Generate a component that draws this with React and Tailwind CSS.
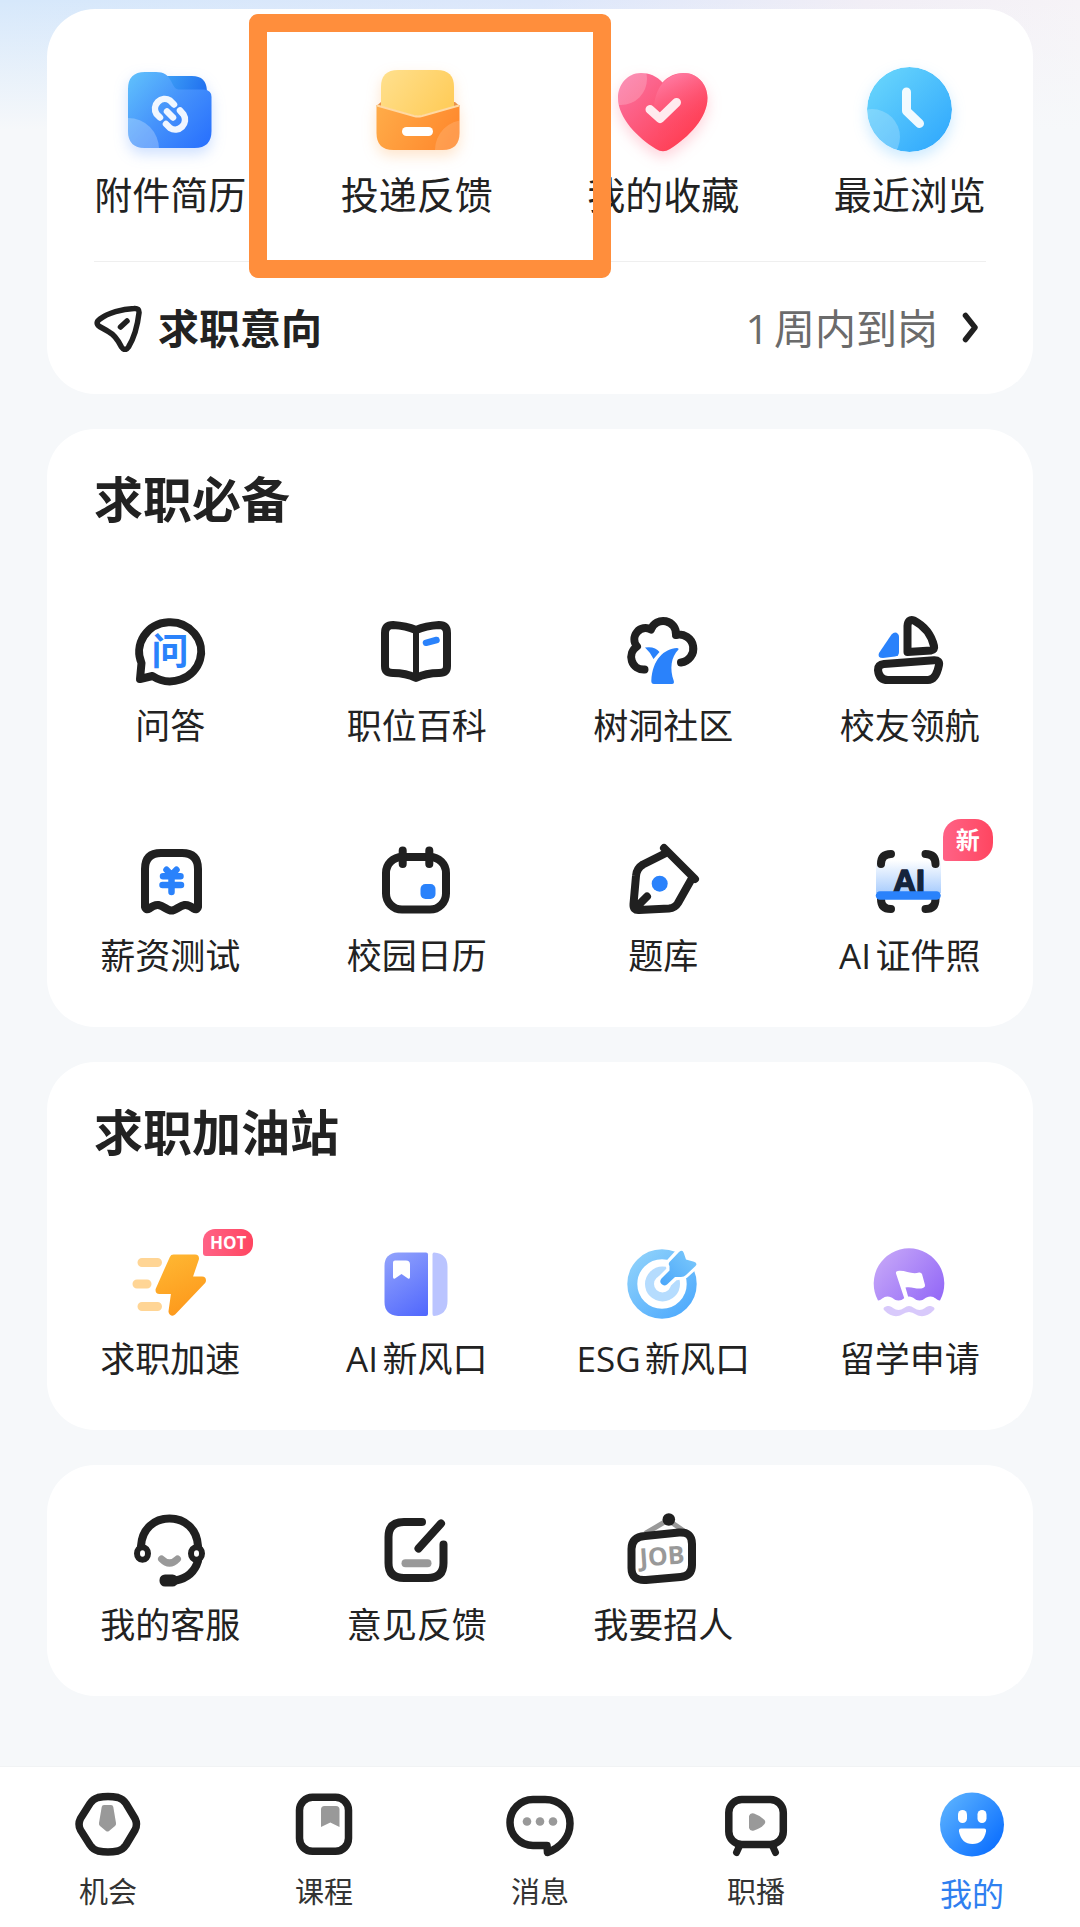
const INK = "#202020";
const BLUE = "#2a82fb";
const GRAY = "#999999";

// Quick links

function FolderIcon() {
  return (
    <svg className="size-28 drop-shadow-[0_6px_7px_rgba(60,130,255,0.25)]" viewBox="0 0 112 112" fill="none" aria-hidden="true">
      <defs>
        <linearGradient id="folder-front" x1="14" y1="24" x2="90" y2="92" gradientUnits="userSpaceOnUse">
          <stop stopColor="#5fbffc" />
          <stop offset="0.5" stopColor="#4592fb" />
          <stop offset="1" stopColor="#2a72fd" />
        </linearGradient>
        <linearGradient id="folder-back" x1="54" y1="22" x2="90" y2="36" gradientUnits="userSpaceOnUse">
          <stop stopColor="#3b9cf5" />
          <stop offset="1" stopColor="#2272f0" />
        </linearGradient>
        <clipPath id="folder-clip">
          <path d="M31 18H42C50 18 54 21 57 27C60 33 61 35.500 66 35.500H90Q97.500 36 97.500 43V77Q97.500 94 80.500 94H31Q14 94 14 77V35Q14 18 31 18Z" />
        </clipPath>
      </defs>
      <path d="M50 22H78Q92.500 22 93 37V44H50Z" fill="url(#folder-back)" />
      <g clipPath="url(#folder-clip)">
        <rect x="14" y="17" width="84" height="78" fill="url(#folder-front)" />
        <circle cx="14" cy="95" r="31" fill="#fff" opacity="0.25" />
      </g>
      <g stroke="#fff" strokeWidth="6.500" strokeLinecap="round" strokeOpacity="0.92">
        <path d="M46 63.500L42.500 60A9.800 9.800 0 0 1 56 46.500L60 50.500" />
        <path d="M66 56.500L69.500 60.500A9.800 9.800 0 0 1 56 74L52 70" />
        <path d="M53 57.500L59 63.500" />
      </g>
    </svg>
  );
}

function EnvelopeIcon() {
  return (
    <svg className="size-28 drop-shadow-[0_6px_7px_rgba(255,150,50,0.25)]" viewBox="0 0 112 112" fill="none" aria-hidden="true">
      <defs>
        <linearGradient id="env-paper" x1="24" y1="18" x2="80" y2="60" gradientUnits="userSpaceOnUse">
          <stop stopColor="#ffdf8b" />
          <stop offset="1" stopColor="#ffcd5c" />
        </linearGradient>
        <linearGradient id="env-body" x1="16" y1="56" x2="84" y2="94" gradientUnits="userSpaceOnUse">
          <stop stopColor="#ffab48" />
          <stop offset="1" stopColor="#ff8a2e" />
        </linearGradient>
        <clipPath id="env-clip">
          <path d="M15.500 51L57 62.500L98.500 51V79Q98.500 96 81.500 96H32.500Q15.500 96 15.500 79Z" />
        </clipPath>
      </defs>
      <path d="M15.500 52L20 48H94L98.500 52L90 58H24Z" fill="#e9924c" />
      <path d="M20 58V33Q20 16 37 16H76Q93 16 93 33V58L57 68Z" fill="url(#env-paper)" />
      <g clipPath="url(#env-clip)">
        <rect x="15" y="48" width="84" height="50" fill="url(#env-body)" />
        <circle cx="104" cy="96" r="30" fill="#fff" opacity="0.15" />
      </g>
      <path d="M16 51.500L53 62Q57 63 61 62L98 51.500" stroke="#ffd9a3" strokeWidth="2" />
      <rect x="41" y="73" width="31" height="9" rx="4.500" fill="#fff" />
    </svg>
  );
}

function HeartIcon() {
  return (
    <svg className="size-28 drop-shadow-[0_6px_7px_rgba(255,80,110,0.25)]" viewBox="0 0 112 112" fill="none" aria-hidden="true">
      <defs>
        <linearGradient id="heart-fill" x1="20" y1="26" x2="76" y2="84" gradientUnits="userSpaceOnUse">
          <stop stopColor="#fb6f9d" />
          <stop offset="1" stopColor="#ff4158" />
        </linearGradient>
        <linearGradient id="heart-lobe" x1="56" y1="24" x2="78" y2="72" gradientUnits="userSpaceOnUse">
          <stop stopColor="#ff7ba3" />
          <stop offset="1" stopColor="#ff4158" stopOpacity="0" />
        </linearGradient>
        <clipPath id="heart-clip">
          <path d="M55.500 28.500C50 22 42 19 34 19C21 19 11 30 11 44C11 64 31 84 49 95Q56 99.500 63 95C82 83 100.500 64 100.500 44C100.500 30 90 19 77 19C69 19 61 22 55.500 28.500Z" />
        </clipPath>
      </defs>
      <g clipPath="url(#heart-clip)">
        <rect x="10" y="18" width="92" height="82" fill="url(#heart-fill)" />
        <path d="M77 19C58 20 46 36 47 58L56 98L102 60V19Z" fill="url(#heart-lobe)" />
        <circle cx="14" cy="25" r="26" fill="#fff" opacity="0.2" />
      </g>
      <path d="M43 55.500L53 64.500L69.500 48.500" stroke="#fff" strokeOpacity="0.88" strokeWidth="9" strokeLinecap="round" strokeLinejoin="round" />
    </svg>
  );
}

function ClockIcon() {
  return (
    <svg className="size-28 drop-shadow-[0_6px_7px_rgba(50,170,255,0.25)]" viewBox="0 0 112 112" fill="none" aria-hidden="true">
      <defs>
        <linearGradient id="clock-fill" x1="26" y1="26" x2="86" y2="86" gradientUnits="userSpaceOnUse">
          <stop stopColor="#63d1fc" />
          <stop offset="1" stopColor="#35acfd" />
        </linearGradient>
        <clipPath id="clock-clip">
          <circle cx="55.500" cy="55.500" r="42.500" />
        </clipPath>
      </defs>
      <g clipPath="url(#clock-clip)">
        <circle cx="55.500" cy="55.500" r="42.500" fill="url(#clock-fill)" />
        <circle cx="18" cy="83" r="28" fill="#fff" opacity="0.22" />
      </g>
      <path d="M52.500 38V57L65.500 69.500" stroke="#fff" strokeOpacity="0.92" strokeWidth="9" strokeLinecap="round" strokeLinejoin="round" />
    </svg>
  );
}

function PlaneIcon() {
  return (
    <svg className="size-12" viewBox="0 0 48 48" fill="none" stroke={INK} strokeWidth="5.500" strokeLinecap="round" strokeLinejoin="round" aria-hidden="true">
      <path d="M6 15C14 9 28 5 40 4.500Q45.500 4 45 9C43.500 22 40 34 34.500 43Q31 48 27.500 43C24 36 21 31 15 28C12 26 9 24.500 5.500 22.500Q0.500 19 6 15Z" />
      <path d="M26.500 23L33 17" />
    </svg>
  );
}

function ChevronIcon() {
  return (
    <svg className="h-9 w-6" viewBox="0 0 24 36" fill="none" stroke={INK} strokeWidth="5.500" strokeLinecap="round" strokeLinejoin="round" aria-hidden="true">
      <path d="M3.500 5.500L13 17.500L3.500 29.500" />
    </svg>
  );
}

// Line icons of the tool grids share one box and stroke

function LineIcon({ children }) {
  return (
    <svg className="size-24" viewBox="0 0 96 96" fill="none" stroke={INK} strokeWidth="8" strokeLinecap="round" strokeLinejoin="round" aria-hidden="true">
      {children}
    </svg>
  );
}

function AskIcon() {
  return (
    <LineIcon>
      <path d="M30.500 73A31 29.500 0 1 0 19.500 60L18 76Z" />
      <text x="48" y="61.500" textAnchor="middle" fontSize="37" fontWeight="700" fill={BLUE} stroke="none">
        问
      </text>
    </LineIcon>
  );
}

function BookIcon() {
  return (
    <LineIcon>
      <path d="M47 27C40 24 32 22.500 24 22Q16 22 16 30V63Q16 70 24 70Q37 70 47 75Q57 70 70 70Q78 70 78 63V30Q78 22 70 22C62 22.500 54 24 47 27Z" />
      <path strokeWidth="6" strokeLinecap="butt" d="M47 28V74" />
      <path stroke={BLUE} strokeWidth="6.500" d="M57 39.800L67.500 37" />
    </LineIcon>
  );
}

function TreeIcon() {
  return (
    <LineIcon>
      <path d="M29.500 66.500A12.500 12.500 0 0 1 22 43.500A11.200 11.200 0 0 1 36 26.500A12.900 12.900 0 0 1 61 32A14 14 0 1 1 66 59.500" />
      <g fill={BLUE} stroke="none">
        <path d="M62 45C49 46 37.500 56 36.300 78Q36.300 81 39 81H57Q59.500 81 58.800 78C54.500 66 56 54 63.500 46.500Q64 45 62 45Z" />
        <path d="M30 44.500Q40 43 44.500 49L38.500 56Q35 49 30 44.500Z" />
      </g>
    </LineIcon>
  );
}

function BoatIcon() {
  return (
    <LineIcon>
      <path d="M45.500 49V23Q46 15.500 52 17.500Q68 26 72 43Q73 47 69 47.500Z" />
      <path d="M22 61L72 57.300Q78 57 77 62Q74 77 66 77H26Q17 77 16 67Q16 61.500 22 61Z" />
      <path fill={BLUE} stroke="none" d="M29.500 31.500Q33 28 36 31Q37 32 37 34V49Q37 53 33 53.500L21 55Q15 55 17 50Z" />
    </LineIcon>
  );
}

function SalaryIcon() {
  return (
    <LineIcon>
      <path d="M23 74V36Q23 20 39 20H60Q76 20 76 36V74Q75 77.500 71.500 75.500Q67 71.500 62.500 72C57 73 54 77.500 49.500 77.500C45 77.500 42 73 36.500 72Q32 71.500 27.500 75.500Q24 77.500 23 74Z" />
      <path stroke={BLUE} strokeWidth="6.500" d="M44.500 36.800L49.500 42L54.500 36.800M41 43.300H58.500M40.500 52H59M49.500 43V59" />
    </LineIcon>
  );
}

function CalendarIcon() {
  return (
    <LineIcon>
      <rect x="17" y="24" width="60" height="52.500" rx="16" />
      <path d="M33.700 17.500V31M60.300 17.500V31" />
      <rect x="51.500" y="51" width="15" height="15" rx="5" fill={BLUE} stroke="none" />
    </LineIcon>
  );
}

function NibIcon() {
  return (
    <LineIcon>
      <path d="M50 20.500L28 31.500Q21.500 35.500 21 43L18.500 71Q18 77.500 24 77L54 75.500Q60 75 63 70L76 47M49 15L80 46M32 63.500L22 73.500" />
      <circle cx="44.700" cy="50.700" r="8" fill={BLUE} stroke="none" />
    </LineIcon>
  );
}

function PhotoIcon() {
  return (
    <LineIcon>
      <defs>
        <linearGradient id="scan-glow" x1="0" y1="27" x2="0" y2="60" gradientUnits="userSpaceOnUse">
          <stop stopColor="#fff" />
          <stop offset="1" stopColor="#a9cdfd" />
        </linearGradient>
      </defs>
      <rect x="14" y="27" width="65" height="33" fill="url(#scan-glow)" stroke="none" />
      <path d="M19 31Q19 21 29 21M63.500 21Q73.500 21 73.500 31M19 66Q19 76 29 76M63.500 76Q73.500 76 73.500 66" />
      <text x="47" y="58.500" textAnchor="middle" fontFamily="Liberation Sans, sans-serif" fontSize="32" fontWeight="700" fill="#14243d" stroke="#14243d" strokeWidth="1.500">
        AI
      </text>
      <path stroke={BLUE} strokeWidth="8.500" d="M18 62.500H74.500" />
    </LineIcon>
  );
}

function BoltIcon() {
  return (
    <LineIcon>
      <defs>
        <linearGradient id="bolt-fill" x1="40" y1="18" x2="66" y2="78" gradientUnits="userSpaceOnUse">
          <stop stopColor="#ffb833" />
          <stop offset="1" stopColor="#fd981b" />
        </linearGradient>
      </defs>
      <path stroke="#ffd595" strokeWidth="9" d="M20 26.500H35.500M15 48H25M20 70.500H35.500" />
      <path fill="url(#bolt-fill)" stroke="url(#bolt-fill)" strokeWidth="8" d="M51.500 22.500H73L65.500 44.500H80L50.500 75.500L53.500 54H37.500Z" />
    </LineIcon>
  );
}

function NotebookIcon() {
  return (
    <LineIcon>
      <defs>
        <linearGradient id="notebook-fill" x1="16" y1="18" x2="58" y2="80" gradientUnits="userSpaceOnUse">
          <stop stopColor="#92a3fc" />
          <stop offset="1" stopColor="#5067fd" />
        </linearGradient>
      </defs>
      <g stroke="none">
        <path fill="url(#notebook-fill)" d="M29 16.500H57Q59 16.500 59 18.500V78Q59 80 57 80H29Q15.500 79 15.500 66V30Q15.500 17 29 16.500Z" />
        <path fill="#bac4ff" d="M65 16.500Q78.500 17.500 78.500 31V65Q78.500 78.500 65 80Q63.500 80 63.500 78V18.500Q63.500 16.500 65 16.500Z" />
        <path fill="#fff" d="M26 24.500H37Q41 24.500 41 28.500V41Q41 43.500 39 42.500L32.500 38L26 42.500Q24 43.500 24 41V26.500Q24 24.500 26 24.500Z" />
      </g>
    </LineIcon>
  );
}

function TargetIcon() {
  return (
    <LineIcon>
      <defs>
        <linearGradient id="target-ring" x1="22" y1="22" x2="70" y2="76" gradientUnits="userSpaceOnUse">
          <stop stopColor="#8bcffb" />
          <stop offset="1" stopColor="#51acfd" />
        </linearGradient>
        <linearGradient id="target-dart" x1="78" y1="18" x2="48" y2="48" gradientUnits="userSpaceOnUse">
          <stop stopColor="#79c7fb" />
          <stop offset="1" stopColor="#4da8fa" />
        </linearGradient>
      </defs>
      <circle cx="47" cy="48" r="29.700" stroke="url(#target-ring)" strokeWidth="10" />
      <circle cx="47.500" cy="48" r="13" stroke="#b5dcfe" strokeWidth="9" />
      <path stroke="#fff" strokeWidth="7" fill="#fff" d="M54 27L64 16L90 2L81 29L70 39L60 41L52 48.500L46.500 42.500L55 34Z" />
      <path
        fill="url(#target-dart)"
        stroke="none"
        d="M54.500 26L64 16Q67.500 13 68.800 17L71 23.500L79 25.800Q83 27.500 80.500 30L71 39Q69 41 66 41H60L52 48.500Q49 50.500 46.500 48Q44 45.500 46.500 42.500L54.500 34.500V30Q53 28 54.500 26Z"
      />
    </LineIcon>
  );
}

function FlagIcon() {
  return (
    <LineIcon>
      <defs>
        <linearGradient id="flag-fill" x1="22" y1="22" x2="74" y2="64" gradientUnits="userSpaceOnUse">
          <stop stopColor="#c1a1f8" />
          <stop offset="1" stopColor="#966cf7" />
        </linearGradient>
      </defs>
      <g stroke="none">
        <path fill="url(#flag-fill)" d="M16 64.500A35.300 35.300 0 1 1 78 64.500C74 64 73 60.500 68.500 60.500C63 60.500 62.500 64.500 57.500 64.500C52.500 64.500 52 60.500 47 60.500C42 60.500 41.500 64.500 36.500 64.500C31.500 64.500 31 60.500 25.500 60.500C21 60.500 20 64 16 64.500Z" />
        <path
          fill="#d8c9fb"
          d="M22 71.500C27 68.500 29 70.500 31 72Q36.500 76 42 72Q47 68 52 72Q57.500 76 63 72C65 70.500 67 68.500 72 71.500Q73.500 73 71.500 74.500C66 80.500 59 81.500 54 78.500Q47 73.500 40 78.500C35 81.500 28 80.500 22.500 74.500Q20.500 73 22 71.500Z"
        />
        <path fill="#fff" d="M34 37.500Q33.500 35 36 35C43 34 50 39 57 36.500Q59 36 60 38L63 49Q63.500 51 61 52C55 54 50 50 43.500 51.500L46.500 62L42.500 63Z" />
      </g>
    </LineIcon>
  );
}

function HeadsetIcon() {
  return (
    <LineIcon>
      <path d="M19 44C20 27 32 16.500 47.500 16.500C63 16.500 75 27 76 44" />
      <path d="M76 59C73 69 66 76 54 78.500" />
      <rect x="37.500" y="72.500" width="18.500" height="12" rx="5.500" fill={INK} stroke="none" />
      <ellipse cx="20.500" cy="51.500" rx="5.500" ry="6.300" strokeWidth="6" fill="#fff" />
      <ellipse cx="74.500" cy="51.500" rx="5.500" ry="6.300" strokeWidth="6" fill="#fff" />
      <path stroke={GRAY} strokeWidth="7" d="M39.500 57Q47.500 65 55.500 57" />
    </LineIcon>
  );
}

function EditIcon() {
  return (
    <LineIcon>
      <path d="M53 20H35Q19.500 20 19.500 35V61Q19.500 76 35 76H59Q74.500 76 74.500 61V42.500M49.500 46.500L72 21.500" />
      <path stroke={GRAY} d="M36.500 61.300H58.500" />
    </LineIcon>
  );
}

function JobIcon() {
  return (
    <LineIcon>
      <path stroke={GRAY} strokeWidth="5" d="M31 31L53 18L69 29" />
      <circle cx="53.800" cy="17.500" r="6.300" fill={INK} stroke="none" />
      <path d="M30 34L64 30.500Q77 29.500 77 42V63Q77 74 65.500 75L31 78Q16.500 79 16.500 66V47Q16.500 35 30 34Z" />
      <text x="47" y="63" textAnchor="middle" fontSize="25" fontWeight="700" fill={GRAY} stroke="none" transform="rotate(-4 47 54)">
        JOB
      </text>
    </LineIcon>
  );
}

// Tab bar icons

function TabIcon({ children }) {
  return (
    <svg className="size-18" viewBox="0 0 72 72" fill="none" stroke={INK} strokeWidth="7.500" strokeLinecap="round" strokeLinejoin="round" aria-hidden="true">
      {children}
    </svg>
  );
}

function ChanceIcon() {
  return (
    <TabIcon>
      <path d="M26 9.500Q36 7.500 46 9.500Q51 11 54 15.500L63 30.500Q66 36.500 63 42L54 57Q51 61.500 46 63Q36 65 26 63Q21 61.500 18 57L8.500 42Q5.500 36.500 8.500 30.500L18 15.500Q21 11 26 9.500Z" />
      <path fill={GRAY} stroke="none" d="M32 17H39Q41 17 41.300 19L44 35Q44.300 37 43 38L37 43Q35.500 44 34 43L28 38Q26.700 37 27 35L29.700 19Q30 17 32 17Z" />
    </TabIcon>
  );
}

function CourseIcon() {
  return (
    <TabIcon>
      <rect x="11.500" y="9.300" width="49" height="54" rx="13" />
      <path fill={GRAY} stroke="none" d="M36.500 18H48Q51.500 18 51.500 21.500V39L42.300 34.500L33 39V21.500Q33 18 36.500 18Z" />
    </TabIcon>
  );
}

function MessageIcon() {
  return (
    <TabIcon>
      <path d="M43 57.500H29A23 23 0 0 1 29 11.500H41C56 11.500 66 22 66 35.500C66 49 57 59.500 43.500 64.500Z" />
      <g fill={GRAY} stroke="none">
        <circle cx="23" cy="33.500" r="4.300" />
        <circle cx="36" cy="33.500" r="4.300" />
        <circle cx="49" cy="33.500" r="4.300" />
      </g>
    </TabIcon>
  );
}

function LiveIcon() {
  return (
    <TabIcon>
      <rect x="8.800" y="11.500" width="54.500" height="45" rx="13" />
      <path strokeWidth="7" d="M19 59L16.500 64.500M53 59L55.500 64.500" />
      <path fill={GRAY} stroke="none" d="M29 28Q30 24.500 34 25.500Q41 28 44.500 32Q46 34 44.500 36Q41 40.500 34 42.500Q30 43.500 29 40Z" />
    </TabIcon>
  );
}

function MineIcon() {
  return (
    <TabIcon>
      <defs>
        <linearGradient id="mine-fill" x1="12" y1="16" x2="60" y2="58" gradientUnits="userSpaceOnUse">
          <stop stopColor="#54acff" />
          <stop offset="1" stopColor="#0f72ff" />
        </linearGradient>
      </defs>
      <circle cx="36" cy="36.500" r="32" fill="url(#mine-fill)" stroke="none" />
      <g fill="#fff" stroke="none">
        <rect x="22" y="22" width="9" height="13" rx="4.500" />
        <rect x="41.500" y="22" width="9" height="13" rx="4.500" />
        <path d="M25 40.500H48Q50.500 40.500 50 43.500Q47.500 56 36.500 56Q25.500 56 23 43.500Q22.500 40.500 25 40.500Z" />
      </g>
    </TabIcon>
  );
}

const shortcuts = [
  { label: "附件简历", Icon: FolderIcon },
  { label: "投递反馈", Icon: EnvelopeIcon, highlighted: true },
  { label: "我的收藏", Icon: HeartIcon },
  { label: "最近浏览", Icon: ClockIcon },
];

const essentials = [
  { label: "问答", Icon: AskIcon },
  { label: "职位百科", Icon: BookIcon },
  { label: "树洞社区", Icon: TreeIcon },
  { label: "校友领航", Icon: BoatIcon },
  { label: "薪资测试", Icon: SalaryIcon },
  { label: "校园日历", Icon: CalendarIcon },
  { label: "题库", Icon: NibIcon },
  { label: "AI证件照", Icon: PhotoIcon, badge: "新" },
];

const boosters = [
  { label: "求职加速", Icon: BoltIcon, badge: "HOT" },
  { label: "AI新风口", Icon: NotebookIcon },
  { label: "ESG新风口", Icon: TargetIcon },
  { label: "留学申请", Icon: FlagIcon },
];

const services = [
  { label: "我的客服", Icon: HeadsetIcon },
  { label: "意见反馈", Icon: EditIcon },
  { label: "我要招人", Icon: JobIcon },
];

const tabs = [
  { label: "机会", Icon: ChanceIcon },
  { label: "课程", Icon: CourseIcon },
  { label: "消息", Icon: MessageIcon },
  { label: "职播", Icon: LiveIcon },
  { label: "我的", Icon: MineIcon, active: true },
];

function Badge({ text }) {
  const size = text === "HOT" ? "-top-[7px] h-[27px] rounded-[12px] text-[17px]" : "-top-[14px] h-[42px] rounded-[18px] text-[24px]";

  return (
    <span className={`absolute left-[81px] flex w-[50px] items-center justify-center rounded-bl-[3px] bg-linear-to-r from-[#ff6286] to-[#ff4560] font-bold text-white ${size}`}>
      {text}
    </span>
  );
}

function ToolGrid({ items }) {
  return (
    <ul className="grid grid-cols-4 gap-y-20">
      {items.map(({ label, Icon, badge }) => (
        <li key={label}>
          <a href="#" className="flex flex-col items-center">
            <span className="relative">
              <Icon />
              {badge && <Badge text={badge} />}
            </span>
            <span className="text-[35px] leading-[54px] whitespace-nowrap [text-autospace:normal]">{label}</span>
          </a>
        </li>
      ))}
    </ul>
  );
}

function ToolCard({ title, items }) {
  return (
    <section className="rounded-[48px] bg-white pt-[34px] pb-[44px]">
      <h2 className="mb-[68px] px-[47px] text-[49px] leading-[72px] font-bold">{title}</h2>
      <ToolGrid items={items} />
    </section>
  );
}

export default function App() {
  return (
    <div className="flex min-h-screen flex-col bg-[#f6f8fa] bg-[linear-gradient(to_bottom,transparent,#f6f8fa),linear-gradient(to_right,#d6e8fb,#dce7fb_50%,#f1eef6_80%,#f6f3f7)] bg-[length:100%_130px] bg-no-repeat font-['Open_Sans','Noto_Sans_CJK_SC',sans-serif] text-[#222222]">
      <main className="flex flex-col gap-[35px] px-[47px] pt-[9px] pb-[70px]">
        <section className="rounded-[48px] bg-white pt-[45px]">
          <ul className="grid grid-cols-4 pb-[39px]">
            {shortcuts.map(({ label, Icon, highlighted }) => (
              <li key={label} className="relative">
                <a href="#" className="flex flex-col items-center">
                  <Icon />
                  <span className="text-[38px] leading-[56px] whitespace-nowrap">{label}</span>
                </a>
                {highlighted && (
                  <span className="pointer-events-none absolute -top-10 -right-[71px] -left-[45px] z-10 h-[264px] rounded-[9px] border-18 border-[#ff8e3c]" />
                )}
              </li>
            ))}
          </ul>

          <a href="#" className="mx-[47px] flex h-[133px] items-center border-t border-[#efefef]">
            <PlaneIcon />
            <span className="ml-4 text-[41px] leading-[60px] font-bold">求职意向</span>
            <span className="mr-6 ml-auto text-[41px] leading-[60px] text-[#6b6b6b] [text-autospace:normal]">1周内到岗</span>
            <ChevronIcon />
          </a>
        </section>

        <ToolCard title="求职必备" items={essentials} />
        <ToolCard title="求职加油站" items={boosters} />

        <section className="rounded-[48px] bg-white pt-[37px] pb-[44px]">
          <ToolGrid items={services} />
        </section>
      </main>

      <nav className="sticky bottom-0 z-20 mt-auto grid grid-cols-5 border-t border-[#f1f3f4] bg-white pt-[21px]">
        {tabs.map(({ label, Icon, active }) => (
          <a key={label} href="#" aria-current={active ? "page" : undefined} className="flex flex-col items-center">
            <Icon />
            <span className={active ? "text-[32px] leading-[67px] text-[#2f80f0]" : "text-[29px] leading-[64px] text-[#333333]"}>{label}</span>
          </a>
        ))}
      </nav>
    </div>
  );
}
